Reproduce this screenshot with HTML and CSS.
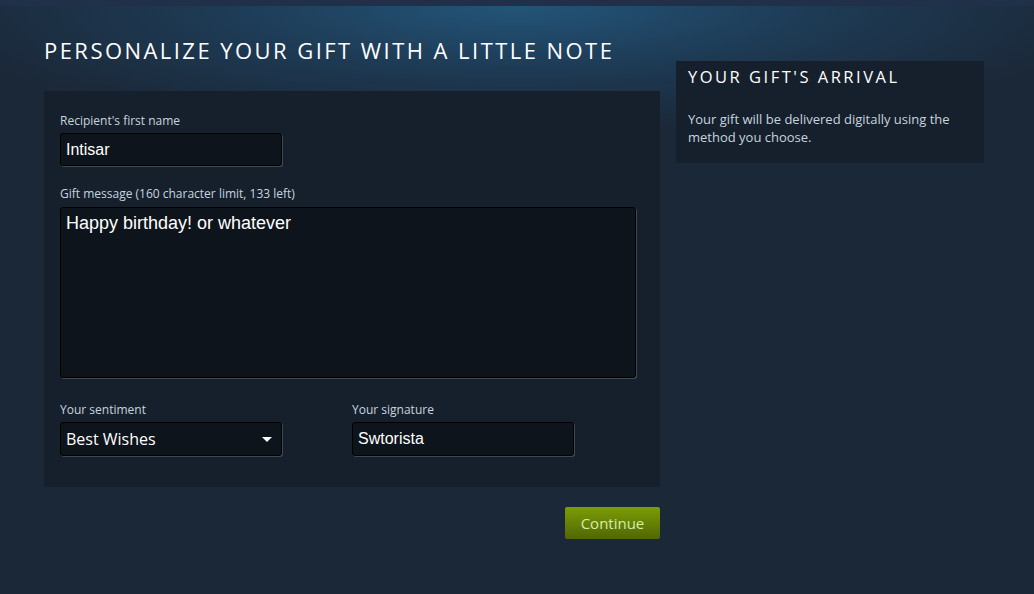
FILE: index.html
```html
<!DOCTYPE html>
<html>
<head>
<meta charset="utf-8">
<link rel="stylesheet" href="styles.css">
</head>
<body>
<div class="topbar"></div>
<div class="page">
  <div class="main-col">
    <h1 class="title">Personalize your gift with a little note</h1>
    <div class="panel">
      <label class="label">Recipient's first name</label>
      <div class="input short">Intisar</div>
      <label class="label gap">Gift message (160 character limit, 133 left)</label>
      <div class="input textarea">Happy birthday! or whatever</div>
      <div class="row">
        <div class="field">
          <label class="label">Your sentiment</label>
          <div class="input short tall select"><span>Best Wishes</span><span class="arrow"></span></div>
        </div>
        <div class="field">
          <label class="label">Your signature</label>
          <div class="input short tall">Swtorista</div>
        </div>
      </div>
    </div>
    <div class="actions">
      <button class="btn">Continue</button>
    </div>
  </div>
  <div class="side-col">
    <div class="side-panel">
      <h2 class="side-title">Your gift's arrival</h2>
      <p class="side-text">Your gift will be delivered digitally using the method you choose.</p>
    </div>
  </div>
</div>
</body>
</html>
```

FILE: styles.css
```css
html, body {
  margin: 0;
  padding: 0;
}
body {
  width: 1034px;
  height: 594px;
  overflow: hidden;
  background-color: #1b2838;
  background-image: radial-gradient(ellipse 600px 125px at 517px 6px, rgba(36, 89, 128, 0.9) 0%, rgba(32, 74, 108, 0.55) 50%, rgba(27, 40, 56, 0) 100%);
  background-repeat: no-repeat;
  font-family: "Open Sans", "Noto Sans", sans-serif;
  color: #c6d4df;
}
.topbar {
  height: 6px;
  background: #1f3048;
}
.page {
  display: flex;
  align-items: flex-start;
  gap: 16px;
  padding-left: 44px;
}
.main-col {
  width: 616px;
  display: flex;
  flex-direction: column;
}
.title {
  margin: 30px 0 27px 0;
  height: 28px;
  line-height: 28px;
  font-size: 22px;
  font-weight: 400;
  letter-spacing: 2.45px;
  text-transform: uppercase;
  color: #ffffff;
  white-space: nowrap;
}
.panel {
  background: #16202d;
  padding: 22px 16px 31px 16px;
  display: flex;
  flex-direction: column;
  align-items: flex-start;
}
.label {
  display: block;
  font-size: 12px;
  line-height: 16px;
  height: 16px;
  margin-bottom: 4px;
  color: #c6d4df;
}
.label.gap {
  margin-top: 20px;
  margin-bottom: 5px;
}
.input {
  box-sizing: border-box;
  background: #0e141b;
  border: 1px solid #000000;
  border-radius: 3px;
  box-shadow: 1px 1px 0 rgba(255, 255, 255, 0.18);
  color: #ffffff;
  font-family: "Liberation Sans", Arial, sans-serif;
  font-size: 16px;
  padding: 0 5px;
}
.short {
  width: 222px;
  height: 33px;
  line-height: 31px;
}
.short.tall {
  height: 34px;
  line-height: 32px;
}
.textarea {
  width: 576px;
  height: 171px;
  padding-top: 5px;
  line-height: 20px;
  font-size: 18px;
}
.row {
  display: flex;
  gap: 70px;
  margin-top: 24px;
}
.field {
  display: flex;
  flex-direction: column;
}
.select {
  display: flex;
  justify-content: space-between;
  align-items: center;
  font-family: "Open Sans", "Noto Sans", sans-serif;
  padding-right: 9px;
}
.arrow {
  width: 0;
  height: 0;
  border-left: 5px solid transparent;
  border-right: 5px solid transparent;
  border-top: 5px solid #ffffff;
  margin-top: 1px;
}
.actions {
  display: flex;
  justify-content: flex-end;
  margin-top: 20px;
}
.btn {
  width: 95px;
  height: 32px;
  border: none;
  border-radius: 2px;
  background: linear-gradient(to bottom, #7a9a06 5%, #536904 95%);
  color: #d2efa9;
  font-family: "Open Sans", "Noto Sans", sans-serif;
  font-size: 15px;
  padding: 0;
  cursor: pointer;
}
.side-col {
  width: 308px;
  margin-top: 55px;
}
.side-panel {
  background: #16202d;
  padding: 4px 12px 17px 12px;
}
.side-title {
  margin: 0;
  font-size: 16.5px;
  line-height: 24px;
  font-weight: 400;
  letter-spacing: 2.5px;
  text-transform: uppercase;
  color: #ffffff;
}
.side-text {
  margin: 21px 0 0 0;
  font-size: 13px;
  line-height: 18px;
  color: #c6d4df;
}
```
